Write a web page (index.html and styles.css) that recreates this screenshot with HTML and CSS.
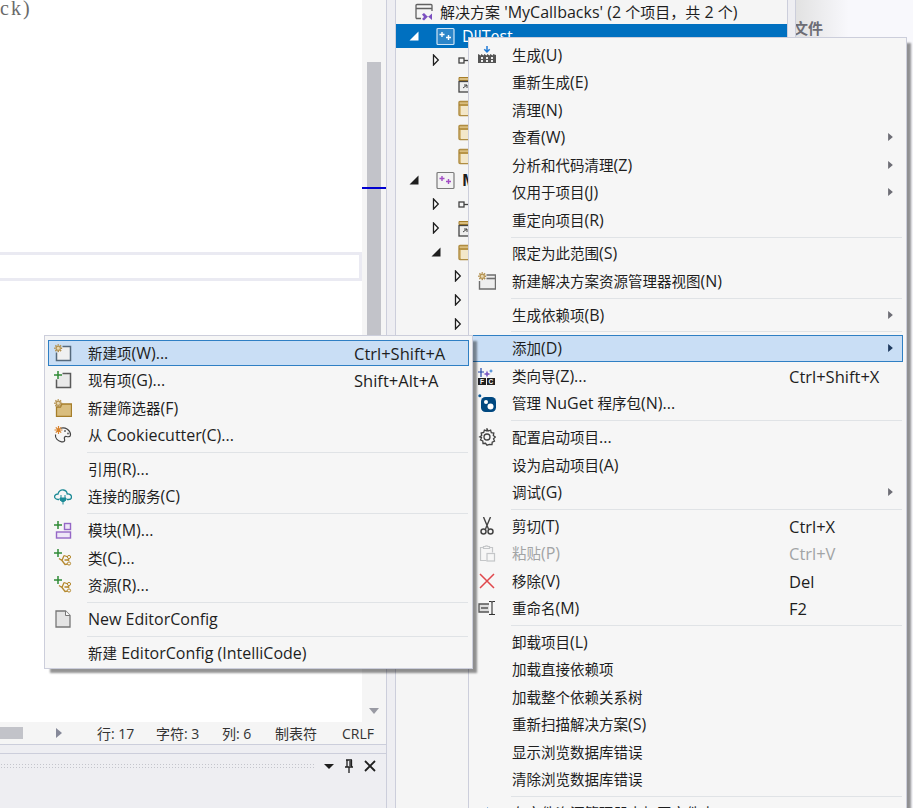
FILE: index.html
```html
<!DOCTYPE html>
<html lang="zh-CN">
<head>
<meta charset="utf-8">
<title>解决方案资源管理器</title>
<link rel="stylesheet" href="styles.css">
</head>
<body>
<svg class="defs" aria-hidden="true">
  <defs>
    <symbol id="gear" viewBox="0 0 8 8"><path d="M4 .2v1.300M4 6.500v1.300M.2 4h1.300M6.500 4h1.300M1.300 1.300l1 1M5.700 5.700l1 1M6.700 1.300l-1 1M2.300 5.700l-1 1" stroke="#b4914f" stroke-width="1.400"/><circle cx="4" cy="4" r="2" fill="#e8d9b4" stroke="#b4914f"/></symbol>
    <symbol id="i-new" viewBox="0 0 18 18"><path d="M8.500 2.500h8v14h-14v-8" fill="#f0f0f0" stroke="#55697c" stroke-width="1.500"/><use href="#gear" x="0" y="0" width="8.500" height="8.500"/></symbol>
    <symbol id="i-existing" viewBox="0 0 18 18"><path d="M8.500 2.500h8v14h-14v-8" fill="#e9e9e9" stroke="#5a5a5a" stroke-width="1.500"/><path d="M4 0v8M0 4h8" stroke="#2f8a36" stroke-width="1.500"/></symbol>
    <symbol id="i-filter" viewBox="0 0 18 18"><path d="M2.500 8h4l1.500-3h9.500v12.500h-15z" fill="#d9bd7e" stroke="#a67e2a" stroke-width="1.300"/><use href="#gear" x="0" y="0" width="8.500" height="8.500"/></symbol>
    <symbol id="i-cookie" viewBox="0 0 18 18"><path d="M6.500 2.200c5-1.500 10 2 10 6.500 0 2.500-2.500 2.200-4 1.800-1.700-.4-2.700 1-2 2.500.7 1.800-.5 3.500-3 2.800C3.500 15 1 12 1.500 8.500" fill="none" stroke="#424242" stroke-width="1.200"/><circle cx="11" cy="5" r="1" fill="#6a6a6a"/><circle cx="14" cy="7.500" r="1" fill="#6a6a6a"/><path d="M4.500 0v8M.5 4h8M1.800 1.300l5.400 5.400M7.200 1.300 1.800 6.700" stroke="#d9822b" stroke-width="1.200"/></symbol>
    <symbol id="i-cloud" viewBox="0 0 18 18"><path d="M5 12.500H4C1 12.500 0 10 1 8.300 1.800 7 3.500 7 4 7c.5-3 3-4.500 5.500-4 2.200.4 3.500 2 3.700 4 2.300-.3 4.300 1 4.300 3 0 1.600-1.500 2.500-3 2.500h-1.500" fill="none" stroke="#1c8a96" stroke-width="1.300"/><path d="M7 8v3M11 8v3M6 11h6v2l-2 1.500h-2l-2-1.500zM9 14.500v3" fill="#1c8a96" stroke="#1c8a96"/></symbol>
    <symbol id="i-module" viewBox="0 0 18 18"><path d="M4 0v8M0 4h8" stroke="#2f8a36" stroke-width="1.500"/><rect x="10.500" y="2.500" width="6" height="6" fill="#eee7f7" stroke="#9567c6" stroke-width="1.400"/><rect x="2.500" y="11" width="14" height="6" fill="#eee7f7" stroke="#9567c6" stroke-width="1.400"/></symbol>
    <symbol id="i-class" viewBox="0 0 18 18"><path d="M4 0v8M0 4h8" stroke="#2f8a36" stroke-width="1.500"/><path d="M5 9.500l3 2 2-5M10 6.500l4 1.500M8 11.500l3 4 3-.5M10.500 11h4" fill="none" stroke="#b5892f" stroke-width="1.300"/><circle cx="15" cy="8" r="1.600" fill="#f5f5f5" stroke="#b5892f"/><circle cx="15" cy="14.500" r="1.600" fill="#f5f5f5" stroke="#b5892f"/><circle cx="14.500" cy="11" r="1" fill="#b5892f"/></symbol>
    <symbol id="i-doc" viewBox="0 0 18 18"><path d="M2 1h9.500l4.500 4.500V17H2z" fill="#e4e4e4" stroke="#777" stroke-width="1.300"/><path d="M11.500 1v4.500H16" fill="#fafafa" stroke="#777"/></symbol>
    <symbol id="i-build" viewBox="0 0 18 18"><path d="M0 17V8l3 1.500V8l3 1.500V8l3 1.500V8l3 1.500V8l3 1.500V8l3 1V17z" fill="#555"/><path d="M3 11h2v2H3zM8 11h2v2H8zM13 11h2v2h-2zM3 14h2v2H3zM8 14h2v2H8zM13 14h2v2h-2z" fill="#eee"/><path d="M9 0v5M6.300 3.200 9 6l2.700-2.800" fill="none" stroke="#1f7ad6" stroke-width="1.500"/></symbol>
    <symbol id="i-view" viewBox="0 0 18 18"><path d="M8.500 3h9v14h-16V9" fill="#eee" stroke="#6e6e6e" stroke-width="1.400"/><path d="M8.500 6.500h9" stroke="#6e6e6e" stroke-width="1.600"/><use href="#gear" x="0" y="0" width="8.500" height="8.500"/></symbol>
    <symbol id="i-wizard" viewBox="0 0 18 18"><path d="M3 1v9M0 5h6" stroke="#2546a8" stroke-width="1.200"/><path d="M9 3.500 10 6l2.500 1L10 8l-1 2.500L8 8 5.500 7 8 6z" fill="#7c5bc2"/><path d="M13 2.500v3M11.500 4h3" stroke="#2c7ad0"/><rect x="0" y="11" width="8" height="7" fill="#222"/><rect x="9" y="11" width="8" height="7" fill="#222"/><text x="2" y="17" class="glyph">F</text><text x="10.500" y="17" class="glyph">C</text></symbol>
    <symbol id="i-nuget" viewBox="0 0 18 18"><circle cx="1.800" cy="1.800" r="1.500" fill="#0c5a9a"/><rect x="3" y="3" width="15" height="15" rx="4.500" fill="#004880"/><circle cx="8" cy="8" r="2" fill="#fff"/><circle cx="12.500" cy="12.500" r="3" fill="#fff"/></symbol>
    <symbol id="i-gear" viewBox="0 0 18 18"><path d="M9 .8l1.200 2.200 2.400-.8.700 2.400 2.500.5-.5 2.400 2 1.500-1.800 1.800 1 2.300-2.300 1-.2 2.500-2.500-.2L9 17.200l-1.500-1.900-2.500.2-.2-2.500-2.300-1 1-2.300L1.700 8.900l2-1.500-.5-2.400 2.500-.5.700-2.400 2.400.8z" fill="none" stroke="#424242" stroke-width="1.300"/><circle cx="9" cy="9" r="3" fill="none" stroke="#424242" stroke-width="1.300"/></symbol>
    <symbol id="i-cut" viewBox="0 0 18 18"><path d="M5.500 0 10.500 12M12.500 0 7.500 12" stroke="#444" stroke-width="1.400"/><circle cx="5.500" cy="14.500" r="2.500" fill="none" stroke="#444" stroke-width="1.500"/><circle cx="12.500" cy="14.500" r="2.500" fill="none" stroke="#444" stroke-width="1.500"/></symbol>
    <symbol id="i-paste" viewBox="0 0 18 18"><path d="M5 3.500H2.500v13h6M12 3.500h2.500v5M5.500 4.500v-2h1.500a2 2 0 0 1 3 0h1.500v2z" fill="none" stroke="#c4c6c8" stroke-width="1.200"/><rect x="9" y="9.500" width="7.500" height="7.500" fill="none" stroke="#c4c6c8" stroke-width="1.200"/></symbol>
    <symbol id="i-del" viewBox="0 0 18 18"><path d="M2 2l14 14M16 2 2 16" stroke="#e0474c" stroke-width="1.500"/></symbol>
    <symbol id="i-rename" viewBox="0 0 18 18"><path d="M11 5H1v8h10" fill="#ddd" stroke="#555" stroke-width="1.300"/><path d="M3 9h7" stroke="#555" stroke-width="1.500"/><path d="M11 2.500h2a1 1 0 0 1 1 1v11a1 1 0 0 1-1 1h-2M17 2.500h-2a1 1 0 0 0-1 1v11a1 1 0 0 0 1 1h2" fill="none" stroke="#333" stroke-width="1.100"/></symbol>
    <symbol id="i-open" viewBox="0 0 18 18"><path d="M3 9h11M9 4l5 5-5 5" fill="none" stroke="#1f6fc0" stroke-width="1.800"/></symbol>
    <symbol id="t-sol" viewBox="0 0 18 18"><path d="M1 15.500v-13a1 1 0 0 1 1-1h14a1 1 0 0 1 1 1V8M1 5.500h16M1 15.500h5" fill="none" stroke="#606060" stroke-width="1.300"/><path d="M7 11.500 9 10l4 4 4-3.500v6.500l-4-3.500-4 4-2-1.500 2-2z" fill="#7b4fc0"/></symbol>
    <symbol id="t-proj" viewBox="0 0 19 19"><rect x="1" y="1.500" width="17" height="16" rx="1" fill="#f3f3f3" stroke="#7a7a7a" stroke-width="1.200"/><path d="M6 5v5M3.500 7.500h5M12.500 8v5M10 10.500h5" stroke="#a14bc4" stroke-width="1.400"/></symbol>
    <symbol id="t-sel" viewBox="0 0 19 19"><rect x="1" y="1.500" width="17" height="16" rx="1" fill="#2d86c9" stroke="#cfe4f5" stroke-width="1.200"/><path d="M6 5v5M3.500 7.500h5M12.500 8v5M10 10.500h5" stroke="#fff" stroke-width="1.400"/></symbol>
    <symbol id="t-ref" viewBox="0 0 17 17"><rect x="1" y="6" width="5" height="5" fill="none" stroke="#424242" stroke-width="1.300"/><path d="M6 8.500h10" stroke="#424242" stroke-width="1.300"/></symbol>
    <symbol id="t-ext" viewBox="0 0 17 17"><path d="M1 1.500h15v3H1z" fill="#d9bd7e" stroke="#a67e2a"/><rect x="1" y="5.500" width="14" height="10.500" fill="#eee" stroke="#444" stroke-width="1.300"/><path d="M5 12l4-3M6 9h3v3" fill="none" stroke="#444"/></symbol>
    <symbol id="t-folder" viewBox="0 0 17 17"><rect x="1" y="1.500" width="15" height="14" rx="1" fill="#d9bd7e" stroke="#b08d42" stroke-width="1.400"/><path d="M1 5h15" stroke="#a67e2a" stroke-width="1.300"/><rect x="3" y="6" width="13" height="9" fill="#f3e7c9"/><circle cx="13" cy="11" r="2" fill="#ccc"/></symbol>
    <symbol id="m-arrow" viewBox="0 0 6 10"><path d="M0 0l6 5-6 5z"/></symbol>
    <symbol id="t-open" viewBox="0 0 7 12"><path d="M1 1l4.800 5L1 11z" fill="#fff" stroke="#1e1e1e" stroke-width="1.300"/></symbol>
    <symbol id="t-exp" viewBox="0 0 10 10"><path d="M9.500.5v9H.5z"/></symbol>
  </defs>
</svg>

<div class="app">
  <div class="left">
    <div class="doc">
      <div class="editor">
        <div class="code">ck)</div>
        <div class="curline"></div>
      </div>
      <div class="vscroll">
        <div class="vthumb"></div>
        <div class="vtick"></div>
        <span class="vdown"></span>
      </div>
    </div>
    <div class="status">
      <div class="hthumb"></div>
      <div class="hnext"><span class="harrow"></span></div>
      <span>行: 17</span>
      <span>字符: 3</span>
      <span>列: 6</span>
      <span>制表符</span>
      <span>CRLF</span>
    </div>
    <div class="panel">
      <div class="ptitle">
        <div class="grip"></div>
        <span class="pdrop"></span>
        <svg class="ppin" width="12" height="14" viewBox="0 0 12 14"><path d="M3 1h6M4 1v7M8.500 1v7M2 8h8M6 8v6M7 2v5" fill="none" stroke="#1e1e1e" stroke-width="1.300"/></svg>
        <svg class="pclose" width="12" height="12" viewBox="0 0 12 12"><path d="M1 1l10 10M11 1 1 11" stroke="#1e1e1e" stroke-width="1.800"/></svg>
      </div>
    </div>
  </div>

  <div class="gutter"></div>

  <div class="tree">
    <div class="row l0"><svg class="ticon"><use href="#t-sol"/></svg><span class="tx"><span class="zh">解决方案</span> 'MyCallbacks' (2 <span class="zh">个项目，共</span> 2 <span class="zh">个</span>)</span></div>
    <div class="row l1 sel"><svg class="tw ws"><use href="#t-exp"/></svg><svg class="pi"><use href="#t-sel"/></svg><span class="tx">DllTest</span></div>
    <div class="row l2"><svg class="tw"><use href="#t-open"/></svg><svg class="fi"><use href="#t-ref"/></svg></div>
    <div class="row l2"><span class="tw"></span><svg class="fi"><use href="#t-ext"/></svg></div>
    <div class="row l2"><span class="tw"></span><svg class="fi"><use href="#t-folder"/></svg></div>
    <div class="row l2"><span class="tw"></span><svg class="fi"><use href="#t-folder"/></svg></div>
    <div class="row l2"><span class="tw"></span><svg class="fi"><use href="#t-folder"/></svg></div>
    <div class="row l1"><svg class="tw"><use href="#t-exp"/></svg><svg class="pi"><use href="#t-proj"/></svg><b class="tx">MyCallbacks</b></div>
    <div class="row l2"><svg class="tw"><use href="#t-open"/></svg><svg class="fi"><use href="#t-ref"/></svg></div>
    <div class="row l2"><svg class="tw"><use href="#t-open"/></svg><svg class="fi"><use href="#t-ext"/></svg></div>
    <div class="row l2"><svg class="tw"><use href="#t-exp"/></svg><svg class="fi"><use href="#t-folder"/></svg></div>
    <div class="row l3"><svg class="tw"><use href="#t-open"/></svg></div>
    <div class="row l3"><svg class="tw"><use href="#t-open"/></svg></div>
    <div class="row l3"><svg class="tw"><use href="#t-open"/></svg></div>
  </div>

  <div class="gutter gutter2"></div>

  <div class="side">
    <div class="sidehead"><span class="sidetitle">文件</span></div>
  </div>
</div>

<div class="menu main">
  <div class="mi"><svg class="ic"><use href="#i-build"/></svg><span class="lbl"><span class="zh">生成</span>(U)</span></div>
  <div class="mi"><span class="ic"></span><span class="lbl"><span class="zh">重新生成</span>(E)</span></div>
  <div class="mi"><span class="ic"></span><span class="lbl"><span class="zh">清理</span>(N)</span></div>
  <div class="mi"><span class="ic"></span><span class="lbl"><span class="zh">查看</span>(W)</span><svg class="arr"><use href="#m-arrow"/></svg></div>
  <div class="mi"><span class="ic"></span><span class="lbl"><span class="zh">分析和代码清理</span>(Z)</span><svg class="arr"><use href="#m-arrow"/></svg></div>
  <div class="mi"><span class="ic"></span><span class="lbl"><span class="zh">仅用于项目</span>(J)</span><svg class="arr"><use href="#m-arrow"/></svg></div>
  <div class="mi"><span class="ic"></span><span class="lbl"><span class="zh">重定向项目</span>(R)</span></div>
  <div class="sep"></div>
  <div class="mi"><span class="ic"></span><span class="lbl"><span class="zh">限定为此范围</span>(S)</span></div>
  <div class="mi"><svg class="ic"><use href="#i-view"/></svg><span class="lbl"><span class="zh">新建解决方案资源管理器视图</span>(N)</span></div>
  <div class="sep"></div>
  <div class="mi"><span class="ic"></span><span class="lbl"><span class="zh">生成依赖项</span>(B)</span><svg class="arr"><use href="#m-arrow"/></svg></div>
  <div class="sep"></div>
  <div class="mi hl"><span class="ic"></span><span class="lbl"><span class="zh">添加</span>(D)</span><svg class="arr arr-hl"><use href="#m-arrow"/></svg></div>
  <div class="mi"><svg class="ic"><use href="#i-wizard"/></svg><span class="lbl"><span class="zh">类向导</span>(Z)...</span><span class="key">Ctrl+Shift+X</span></div>
  <div class="mi"><svg class="ic"><use href="#i-nuget"/></svg><span class="lbl"><span class="zh">管理</span> NuGet <span class="zh">程序包</span>(N)...</span></div>
  <div class="sep"></div>
  <div class="mi"><svg class="ic"><use href="#i-gear"/></svg><span class="lbl"><span class="zh">配置启动项目</span>...</span></div>
  <div class="mi"><span class="ic"></span><span class="lbl"><span class="zh">设为启动项目</span>(A)</span></div>
  <div class="mi"><span class="ic"></span><span class="lbl"><span class="zh">调试</span>(G)</span><svg class="arr"><use href="#m-arrow"/></svg></div>
  <div class="sep"></div>
  <div class="mi"><svg class="ic"><use href="#i-cut"/></svg><span class="lbl"><span class="zh">剪切</span>(T)</span><span class="key">Ctrl+X</span></div>
  <div class="mi off"><svg class="ic"><use href="#i-paste"/></svg><span class="lbl"><span class="zh">粘贴</span>(P)</span><span class="key">Ctrl+V</span></div>
  <div class="mi"><svg class="ic"><use href="#i-del"/></svg><span class="lbl"><span class="zh">移除</span>(V)</span><span class="key">Del</span></div>
  <div class="mi"><svg class="ic"><use href="#i-rename"/></svg><span class="lbl"><span class="zh">重命名</span>(M)</span><span class="key">F2</span></div>
  <div class="sep"></div>
  <div class="mi"><span class="ic"></span><span class="lbl"><span class="zh">卸载项目</span>(L)</span></div>
  <div class="mi"><span class="ic"></span><span class="lbl"><span class="zh">加载直接依赖项</span></span></div>
  <div class="mi"><span class="ic"></span><span class="lbl"><span class="zh">加载整个依赖关系树</span></span></div>
  <div class="mi"><span class="ic"></span><span class="lbl"><span class="zh">重新扫描解决方案</span>(S)</span></div>
  <div class="mi"><span class="ic"></span><span class="lbl"><span class="zh">显示浏览数据库错误</span></span></div>
  <div class="mi"><span class="ic"></span><span class="lbl"><span class="zh">清除浏览数据库错误</span></span></div>
  <div class="sep"></div>
  <div class="mi"><svg class="ic"><use href="#i-open"/></svg><span class="lbl"><span class="zh">在文件资源管理器中打开文件夹</span></span></div>
</div>

<div class="menu sub">
  <div class="mi hl"><svg class="ic"><use href="#i-new"/></svg><span class="lbl"><span class="zh">新建项</span>(W)...</span><span class="key">Ctrl+Shift+A</span></div>
  <div class="mi"><svg class="ic"><use href="#i-existing"/></svg><span class="lbl"><span class="zh">现有项</span>(G)...</span><span class="key">Shift+Alt+A</span></div>
  <div class="mi"><svg class="ic"><use href="#i-filter"/></svg><span class="lbl"><span class="zh">新建筛选器</span>(F)</span></div>
  <div class="mi"><svg class="ic"><use href="#i-cookie"/></svg><span class="lbl"><span class="zh">从</span> Cookiecutter(C)...</span></div>
  <div class="sep"></div>
  <div class="mi"><span class="ic"></span><span class="lbl"><span class="zh">引用</span>(R)...</span></div>
  <div class="mi"><svg class="ic"><use href="#i-cloud"/></svg><span class="lbl"><span class="zh">连接的服务</span>(C)</span></div>
  <div class="sep"></div>
  <div class="mi"><svg class="ic"><use href="#i-module"/></svg><span class="lbl"><span class="zh">模块</span>(M)...</span></div>
  <div class="mi"><svg class="ic"><use href="#i-class"/></svg><span class="lbl"><span class="zh">类</span>(C)...</span></div>
  <div class="mi"><svg class="ic"><use href="#i-class"/></svg><span class="lbl"><span class="zh">资源</span>(R)...</span></div>
  <div class="sep"></div>
  <div class="mi"><svg class="ic"><use href="#i-doc"/></svg><span class="lbl">New EditorConfig</span></div>
  <div class="sep"></div>
  <div class="mi"><span class="ic"></span><span class="lbl"><span class="zh">新建</span> EditorConfig (IntelliCode)</span></div>
</div>
</body>
</html>
```
FILE: styles.css
```css
* { box-sizing: border-box; }
html, body { margin: 0; height: 808px; overflow: hidden; }
body {
  position: relative;
  width: 913px;
  background: #f5f5f5;
  color: #1e1e1e;
  font-family: "Open Sans", "Noto Sans CJK SC", sans-serif;
  font-size: 14px;
}
.defs { position: absolute; width: 0; height: 0; }
.glyph { font: bold 6.500px "Liberation Sans", sans-serif; fill: #fff; }
.zh { font-size: 14.500px; }

.app { display: flex; height: 808px; }

/* left document column */
.left { width: 387px; flex: none; display: flex; flex-direction: column; border-right: 1px solid #cccedb; }
.doc { display: flex; height: 722px; flex: none; }
.editor { flex: 1; background: #fff; overflow: hidden; }
.code { font: 20px/17px "Liberation Serif", serif; letter-spacing: 2px; color: #6a6a6a; height: 252px; }
.curline { height: 29px; border: 3px solid #eaeaf2; border-left: none; }
.vscroll { position: relative; width: 24px; flex: none; background: #f5f5f5; padding: 62px 5px 0; }
.vthumb { height: 540px; background: #c2c3c9; }
.vtick { position: absolute; left: 0; top: 187px; width: 24px; height: 2px; background: #0000d0; }
.vdown { position: absolute; left: 7px; top: 708px; border: 5px solid transparent; border-top: 6px solid #999aa3; border-bottom: none; }

.status {
  display: grid;
  grid-template-columns: 23px 74px 59px 66px 53px 67px 1fr;
  align-items: center;
  height: 23px;
  flex: none;
  background: #f5f5f5;
  border-bottom: 1px solid #cccedb;
  font-size: 14px;
  color: #333;
}
.hthumb { height: 12px; background: #c2c3c9; }
.hnext { padding-left: 33px; display: flex; }
.harrow { border: 5px solid transparent; border-left: 6px solid #868999; border-right: none; }

.panel { flex: 1; background: #eeeef2; padding-top: 8px; }
.ptitle { display: flex; align-items: center; height: 25px; border-top: 1px solid #cccedb; }
.grip {
  width: 314px; height: 6px; margin-right: 10px;
  background-image: radial-gradient(#c4c5cc 0.8px, transparent 0.9px);
  background-size: 3px 3px;
}
.pdrop { border: 5px solid transparent; border-top: 5px solid #1e1e1e; border-bottom: none; }
.ppin { margin-left: 9px; }
.pclose { margin-left: 9px; }

.gutter { width: 9px; flex: none; background: #eeeef2; border-right: 1px solid #cccedb; }
.gutter2 { border-left: 1px solid #cccedb; border-right: 1px solid #cccedb; }

/* solution tree */
.tree { width: 391px; flex: none; background: #f5f5f5; overflow: hidden; font-size: 16px; }
.tree .zh { font-size: 15px; }
.row { display: flex; align-items: center; height: 24px; white-space: nowrap; }
.tx { margin-left: 7px; }
.l0 { padding-left: 19px; }
.l1 { padding-left: 13px; }
.l2 { padding-left: 35px; }
.l3 { padding-left: 57px; }
.ticon { width: 18px; height: 18px; flex: none; }
.tw { width: 10px; height: 12px; flex: none; margin-right: 18px; fill: #1e1e1e; }
.l2 .tw { margin-right: 17px; }
.ws { fill: #fff; }
.pi { width: 19px; height: 19px; flex: none; margin-left: -1px; }
.fi { width: 17px; height: 17px; flex: none; }
.sel { background: #0070c0; color: #fff; }

/* right panel */
.side { flex: 1; background: #f8f8fc; overflow: hidden; }
.sidehead { height: 48px; padding-top: 18px; background: linear-gradient(90deg, #e2e2e2, #f8f8fc 45%); }
.sidetitle { display: block; margin-left: -3px; font-size: 15px; line-height: 20px; font-weight: 700; color: #6d6d75; }

/* context menus */
.menu {
  position: absolute;
  background: #f6f6f6;
  border: 1px solid #cccedb;
  padding: 3.500px 3px;
  box-shadow: 5px 5px 2px -1px rgba(0, 0, 0, .42);
  font-size: 16px;
  color: #1e1e1e;
}
.main { left: 468px; top: 37px; width: 439px; height: 820px; }
.sub { left: 44px; top: 335px; width: 429px; height: 334px; z-index: 2; }
.mi { display: flex; align-items: center; height: 26.500px; margin-bottom: 1px; padding-left: 6px; border: 1px solid transparent; white-space: nowrap; }
.ic { width: 18px; height: 18px; flex: none; margin-left: -1px; margin-right: 16px; }
.lbl { flex: none; line-height: 20px; padding-top: 1px; }
.main .lbl { width: 277px; }
.sub .lbl { width: 266px; }
.key { font-size: 16.500px; padding-top: 1px; }
.hl { background: #c9def5; border-color: #2f7fc4; }
.off { color: #a2a4a5; }
.sep { height: 1px; margin: 3.500px 1px 2.700px 39px; background: #e0e3e6; }
.arr { width: 5px; height: 8px; margin-left: 99px; fill: #6d6d75; flex: none; }
.arr-hl { fill: #1e3a5f; }
```
